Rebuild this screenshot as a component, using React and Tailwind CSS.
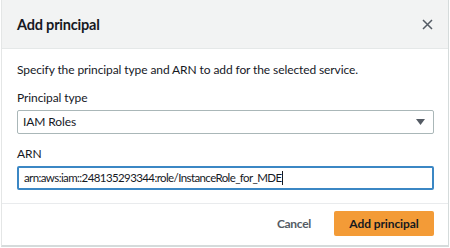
export default function App() {
  return (
    <div className="w-[450px] h-[248px] bg-white pl-[1px] font-['Lato',sans-serif] text-[#16191f]">
      <div className="w-[448px] h-[247px] flex flex-col border-l border-r border-b-2 border-l-[#e4e6e6] border-r-[#d5dbdb] border-b-[#d5dbdb]">
        <div className="h-[49px] shrink-0 flex items-center justify-between pl-[15px] pr-[15px] bg-[#f2f3f3] border-b border-[#e5e8e8]">
          <h2 className="text-[14.5px] font-bold tracking-[-0.2px] pt-[1px]">Add principal</h2>
          <svg width="11" height="11" viewBox="0 0 11 11" fill="none" stroke="#545b64" strokeWidth="1.5">
            <path d="M1 1l9 9M10 1L1 10" />
          </svg>
        </div>
        <div className="flex-1 flex flex-col pl-[15px] pr-[14px] pt-[12px]">
          <p className="text-[12px] leading-[18px] tracking-[-0.1px]">Specify the principal type and ARN to add for the selected service.</p>
          <label className="mt-[10px] text-[12px] leading-[18px] tracking-[-0.1px]">Principal type</label>
          <div className="mt-[3px] h-[24px] flex items-center justify-between pl-[5px] pr-[8px] border border-[#aab7b8] rounded-[2px]">
            <span className="text-[12px] tracking-[-0.1px]">IAM Roles</span>
            <svg width="9" height="6" viewBox="0 0 9 6" fill="#545b64">
              <path d="M0 0h9L4.5 6z" />
            </svg>
          </div>
          <label className="mt-[11px] text-[12px] leading-[18px] tracking-[-0.1px]">ARN</label>
          <div className="mt-[3px] h-[24px] flex items-center pl-[5px] border-2 border-[#3b87c4] rounded-[2px]">
            <span className="text-[11.5px] tracking-[-0.6px]">arn:aws:iam::248135293344:role/InstanceRole_for_MDE</span>
            <span className="w-px h-[14px] bg-[#16191f]" />
          </div>
        </div>
        <div className="h-[42px] shrink-0 flex items-center justify-end gap-[23px] pr-[14px] pb-[2px] border-t border-[#e9ebed]">
          <button className="text-[12px] font-bold text-[#545b64] tracking-[-0.3px]">Cancel</button>
          <button className="w-[100px] h-[25px] rounded-[2px] bg-[#f39b37] text-[12px] font-bold tracking-[-0.1px]">Add principal</button>
        </div>
      </div>
    </div>
  );
}
